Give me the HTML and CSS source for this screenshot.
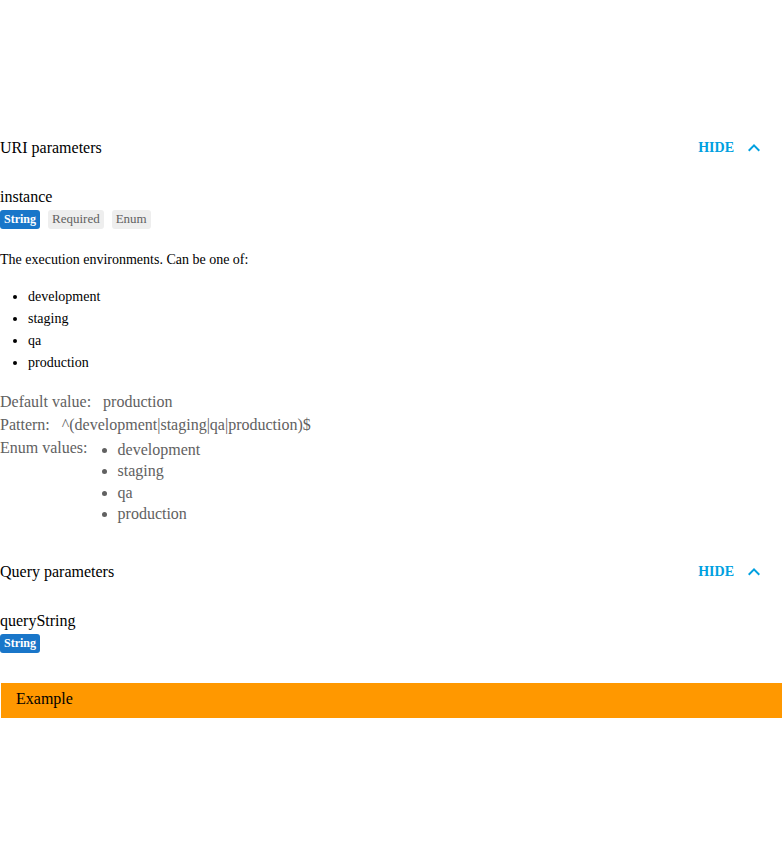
FILE: index.html
```html
<!DOCTYPE html>
<html>
<head>
<meta charset="utf-8">
<link rel="stylesheet" href="styles.css">
</head>
<body>
<section class="params">
  <div class="section-head">
    <span class="section-title">URI parameters</span>
    <button class="toggle">HIDE
      <svg class="chev" width="24" height="24" viewBox="0 0 24 24"><path d="M12 8l-6 6 1.41 1.41L12 10.83l4.59 4.58L18 14z" fill="currentColor"/></svg>
    </button>
  </div>
  <div class="param">
    <div class="param-name">instance</div>
    <div class="badges">
      <span class="badge type">String</span>
      <span class="badge">Required</span>
      <span class="badge">Enum</span>
    </div>
    <p class="desc">The execution environments. Can be one of:</p>
    <ul class="desc-list">
      <li>development</li>
      <li>staging</li>
      <li>qa</li>
      <li>production</li>
    </ul>
    <div class="prop"><span class="label">Default value:</span><span>production</span></div>
    <div class="prop"><span class="label">Pattern:</span><span>^(development|staging|qa|production)$</span></div>
    <div class="prop enum"><span class="label">Enum values:</span>
      <ul class="enum-list">
        <li>development</li>
        <li>staging</li>
        <li>qa</li>
        <li>production</li>
      </ul>
    </div>
  </div>
</section>
<section class="params query">
  <div class="section-head">
    <span class="section-title">Query parameters</span>
    <button class="toggle">HIDE
      <svg class="chev" width="24" height="24" viewBox="0 0 24 24"><path d="M12 8l-6 6 1.41 1.41L12 10.83l4.59 4.58L18 14z" fill="currentColor"/></svg>
    </button>
  </div>
  <div class="param">
    <div class="param-name">queryString</div>
    <div class="badges">
      <span class="badge type">String</span>
    </div>
  </div>
</section>
<div class="example">Example</div>
</body>
</html>
```
FILE: styles.css
```css
body {
  margin: 0;
  font-family: "Liberation Serif", "Times New Roman", serif;
  color: #000;
  background: #fff;
}
.params {
  margin-top: 128px;
}
.params.query {
  margin-top: 28px;
}
.section-head {
  height: 40px;
  display: flex;
  align-items: center;
  justify-content: space-between;
  padding-right: 18px;
}
.section-title {
  font-size: 16px;
}
.toggle {
  display: flex;
  align-items: center;
  gap: 8px;
  border: 0;
  background: none;
  padding: 0;
  font-family: "Liberation Serif", "Times New Roman", serif;
  font-weight: bold;
  font-size: 14px;
  color: #00a0e0;
  cursor: pointer;
}
.chev {
  display: block;
}
.param-name {
  margin-top: 19px;
  font-size: 16px;
  line-height: 20px;
}
.badges {
  margin-top: 3px;
  display: flex;
  gap: 8px;
}
.badge {
  font-size: 13px;
  line-height: 18px;
  height: 19px;
  padding: 0 4px;
  border-radius: 3px;
  background: #eeeeee;
  color: #616161;
}
.badge.type {
  background: #1976c9;
  color: #fff;
  font-size: 12px;
  font-weight: bold;
}
.desc {
  margin: 22px 0 0;
  font-size: 14px;
  line-height: 17px;
}
.desc-list {
  margin: 18px 0 16px;
  padding-left: 28px;
  font-size: 14px;
  line-height: 22px;
}
.prop {
  display: flex;
  font-size: 16px;
  line-height: 23px;
  color: #616161;
}
.label {
  margin-right: 12px;
}
.enum-list {
  margin: 3px 0 0;
  padding-left: 18px;
  line-height: 21.33px;
}
.example {
  margin: 30px 2px 0 1px;
  height: 35px;
  box-sizing: border-box;
  display: flex;
  align-items: center;
  padding: 0 0 4px 15px;
  background: #ff9800;
  font-size: 16px;
}
```
